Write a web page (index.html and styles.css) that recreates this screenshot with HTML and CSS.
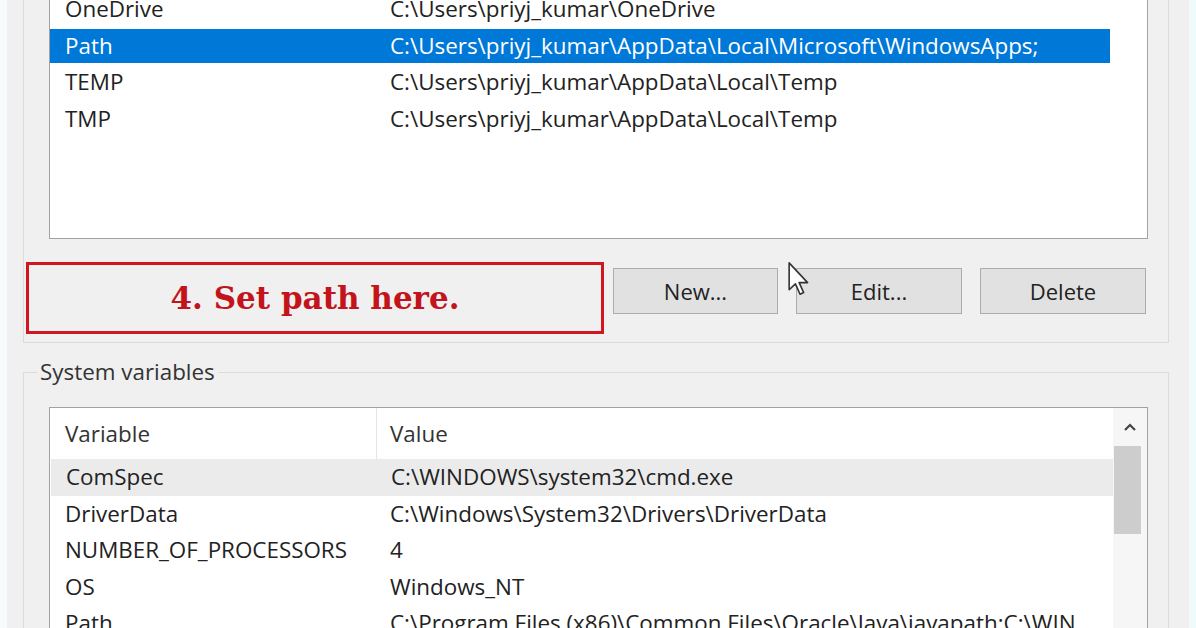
FILE: index.html
```html
<!DOCTYPE html>
<html lang="en">
<head>
  <meta charset="UTF-8">
  <meta name="viewport" content="width=device-width, initial-scale=1.0">
  <title>Environment Variables</title>
  <link rel="stylesheet" href="styles.css">
</head>
<body>
  <div class="edge edge-left"></div>

  <main class="dialog">
    <!-- user variables, scrolled so only the lower part shows -->
    <section class="group user-group">
      <div class="list user-list">
        <div class="row"><span class="name">OneDrive</span><span class="value">C:\Users\priyj_kumar\OneDrive</span></div>
        <div class="row selected"><span class="name">Path</span><span class="value">C:\Users\priyj_kumar\AppData\Local\Microsoft\WindowsApps;</span></div>
        <div class="row"><span class="name">TEMP</span><span class="value">C:\Users\priyj_kumar\AppData\Local\Temp</span></div>
        <div class="row"><span class="name">TMP</span><span class="value">C:\Users\priyj_kumar\AppData\Local\Temp</span></div>
      </div>

      <div class="actions">
        <div class="note">4. Set path here.</div>
        <button type="button" class="btn">New...</button>
        <button type="button" class="btn">Edit...</button>
        <button type="button" class="btn">Delete</button>
      </div>
    </section>

    <fieldset class="group system-group">
      <legend>System variables</legend>
      <div class="list system-list">
        <div class="table">
          <div class="row head"><span class="name">Variable</span><span class="value">Value</span></div>
          <div class="row hover"><span class="name">ComSpec</span><span class="value">C:\WINDOWS\system32\cmd.exe</span></div>
          <div class="row"><span class="name">DriverData</span><span class="value">C:\Windows\System32\Drivers\DriverData</span></div>
          <div class="row"><span class="name">NUMBER_OF_PROCESSORS</span><span class="value">4</span></div>
          <div class="row"><span class="name">OS</span><span class="value">Windows_NT</span></div>
          <div class="row"><span class="name">Path</span><span class="value">C:\Program Files (x86)\Common Files\Oracle\Java\javapath;C:\WIN</span></div>
        </div>
        <div class="scrollbar">
          <div class="scroll-up">
            <svg width="14" height="10" viewBox="0 0 14 10"><path d="M2 8 L7 3 L12 8" fill="none" stroke="#444" stroke-width="2.2"/></svg>
          </div>
          <div class="thumb"></div>
        </div>
      </div>
    </fieldset>
  </main>

  <div class="edge edge-right"></div>

  <!-- mouse pointer over the buttons -->
  <svg class="cursor" width="22" height="34" viewBox="0 0 12 19">
    <path d="M0.5 0.5 L0.5 15.5 L4 12.2 L6.6 18 L8.6 17.1 L6.1 11.5 L10.8 11.5 Z" fill="#fff" stroke="#333" stroke-width="0.9" stroke-linejoin="round"/>
  </svg>
</body>
</html>
```

FILE: styles.css
```css
html * {
  font-family: "Open Sans", "Noto Sans", sans-serif;
}

body {
  margin: 0;
  height: 628px;
  overflow: hidden;
  display: flex;
  background-color: #f0f0f0;
  color: #222;
  font-size: 22.4px;
}

.edge-left {
  width: 7px;
  background-color: #f6fbfc;
}

.edge-right {
  width: 7px;
  background-color: #eefafc;
  border-left: 2px solid #f5eef0;
}

.dialog {
  flex: 1;
  padding: 0 18px 0 16px;
}

.group {
  border: 1px solid #dcdcdc;
}

.user-group {
  border-top: none;
  margin-top: -20px;
  padding: 11px 20px 8px 25px;
}

.list {
  box-sizing: border-box;
  border: 1px solid #a2a2a2;
  background-color: #fff;
}

.user-list {
  height: 248px;
}

.row {
  display: grid;
  grid-template-columns: 327px 1fr;
  white-space: nowrap;
}

.row .name {
  padding-left: 15px;
  overflow: hidden;
}

.row .value {
  padding-left: 13px;
  overflow: hidden;
}

.user-list .row {
  height: 34.5px;
  line-height: 34.5px;
  margin: 0 37px 2px 0;
}

.row.selected {
  background-color: #0078d7;
  color: #fff;
}

/* buttons row with the red annotation */
.actions {
  display: flex;
  align-items: flex-start;
  gap: 18px;
  margin-top: 23px;
}

.note {
  box-sizing: border-box;
  width: 578px;
  height: 72px;
  margin-left: -23px;
  margin-right: -9px;
  border: 3px solid #d2161f;
  display: flex;
  align-items: center;
  justify-content: center;
  color: #c3141c;
  font-family: "DejaVu Serif", serif;
  font-weight: bold;
  font-size: 31px;
}

.btn {
  box-sizing: border-box;
  width: 166px;
  height: 46px;
  margin-top: 6px;
  background-color: #e1e1e1;
  border: 1px solid #adadad;
  color: #222;
  font-size: 22px;
  padding: 0;
}

.btn:first-of-type {
  width: 165px;
}

/* system variables */
.system-group {
  margin: 16px 0 0;
  padding: 22px 20px 0 25px;
  min-inline-size: 0;
}

.system-group legend {
  margin-left: -12px;
  padding: 0 3px;
  color: #333;
  line-height: 26px;
}

.system-list {
  display: flex;
  height: 260px;
}

.table {
  flex: 1;
  min-width: 0;
}

.system-list .row {
  height: 36.5px;
  line-height: 36.5px;
}

.system-list .row.head {
  height: 51px;
  line-height: 51px;
  color: #333;
}

.row.head .name {
  border-right: 1px solid #e5e5e5;
}

.row.hover {
  background-color: #ebebeb;
  margin-left: 1px;
}

.scrollbar {
  width: 34px;
  background-color: #f6f6f6;
}

.scroll-up {
  height: 38px;
  display: flex;
  align-items: center;
  justify-content: center;
}

.thumb {
  width: 27px;
  height: 88px;
  margin-left: 1px;
  background-color: #cdcdcd;
}

.cursor {
  position: absolute;
  left: 788px;
  top: 262px;
}
```
